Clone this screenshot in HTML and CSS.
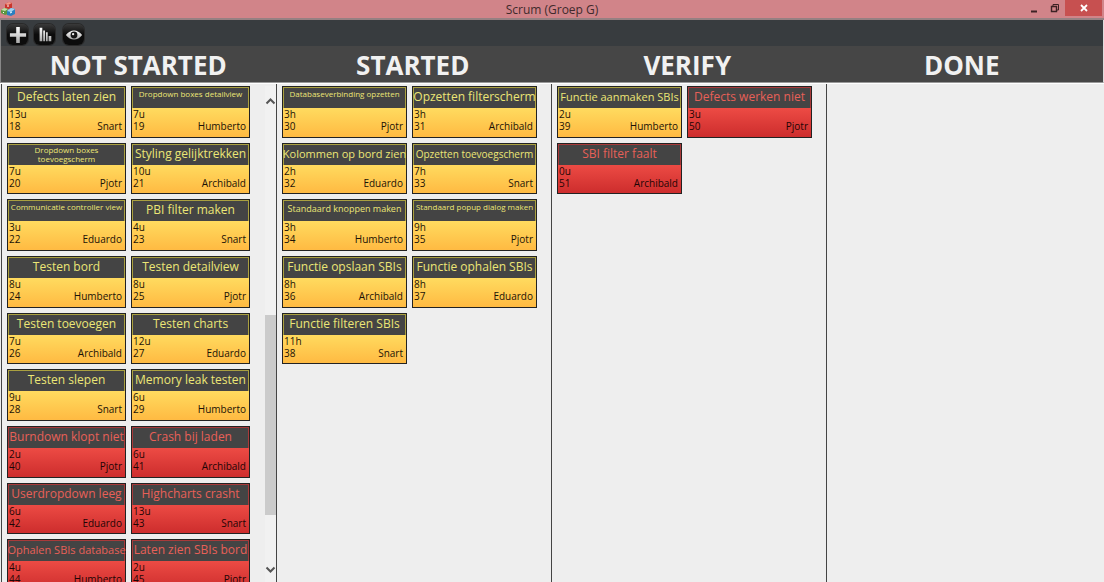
FILE: index.html
```html
<!DOCTYPE html>
<html lang="nl">
<head>
<meta charset="utf-8">
<title>Scrum (Groep G)</title>
<link rel="stylesheet" href="styles.css">
</head>
<body>
<div class="window">
<header class="titlebar">
<svg class="app-icon" viewBox="0 0 16 16" aria-hidden="true">
<path d="M5 3l4-2 3 1v5l-4 1-3-1z" fill="#c8352c"/><path d="M5 3l4-2 3 1-4 2z" fill="#f29a8c"/>
<path d="M1 9l3-2 4 1v5l-3 1-4-2z" fill="#5c9640"/><path d="M1 9l3-2 4 1-3 2z" fill="#c3dda4"/>
<path d="M7 10l4-3 4 1v5l-4 2-4-1z" fill="#2b7fc0"/><path d="M7 10l4-3 4 1-4 3z" fill="#a4d4f0"/>
<path d="M7 5l2 0M3 11l1 1M10 12l2-1" stroke="#fff" fill="none"/>
</svg>
<h1 class="window-title">Scrum (Groep G)</h1>
<div class="window-buttons">
<button class="win-btn" aria-label="Minimaliseren"><svg viewBox="0 0 10 10"><path d="M2 8.5h6" stroke="#3c2224" stroke-width="2"/></svg></button>
<button class="win-btn" aria-label="Herstellen"><svg viewBox="0 0 10 10" fill="none" stroke="#3c2224"><path d="M1.5 3.5h5v5h-5z" stroke-width="1.4"/><path d="M3 3V1.5h5.500v5.500H7"/></svg></button>
<button class="win-btn close" aria-label="Sluiten"><svg viewBox="0 0 10 10"><path d="M2 2l6 6M8 2l-6 6" stroke="#fff" stroke-width="1.8"/></svg></button>
</div>
</header>
<nav class="toolbar">
<button class="tool" aria-label="Toevoegen"><svg viewBox="0 0 20 20"><defs><linearGradient id="m" x2="0" y2="1"><stop stop-color="#fff"/><stop offset="1" stop-color="#a8a8a8"/></linearGradient></defs><path d="M8 1h4v7h7v4h-7v7H8v-7H1V8h7z" fill="url(#m)"/></svg></button>
<button class="tool" aria-label="Grafieken"><svg viewBox="0 0 20 20"><path d="M4 2h3v15H4zM8 5h2v12H8zM11 7h2v10h-2zM14 11h3v6h-3z" fill="url(#m)"/></svg></button>
<button class="tool gap" aria-label="Weergave"><svg viewBox="0 0 20 20"><path d="M1 10Q5 5 10 5t9 5Q15 15 10 15T1 10z" fill="url(#m)"/><circle cx="10" cy="10" r="3.8" fill="#151515"/><circle cx="9" cy="9" r="1.3" fill="#eee"/></svg></button>
</nav>
<div class="headings">
<h2>NOT STARTED</h2><h2>STARTED</h2><h2>VERIFY</h2><h2>DONE</h2>
</div>
<main class="board">
<section class="column scrolling" aria-label="Not started">
<div class="cards">
<article class="card"><h3>Defects laten zien</h3><p>13u</p><p class="row"><span>18</span><span>Snart</span></p></article>
<article class="card"><h3 class="small">Dropdown boxes detailview</h3><p>7u</p><p class="row"><span>19</span><span>Humberto</span></p></article>
<article class="card"><h3 class="small wrap">Dropdown boxes toevoegscherm</h3><p>7u</p><p class="row"><span>20</span><span>Pjotr</span></p></article>
<article class="card"><h3>Styling gelijktrekken</h3><p>10u</p><p class="row"><span>21</span><span>Archibald</span></p></article>
<article class="card"><h3 class="small">Communicatie controller view</h3><p>3u</p><p class="row"><span>22</span><span>Eduardo</span></p></article>
<article class="card"><h3>PBI filter maken</h3><p>4u</p><p class="row"><span>23</span><span>Snart</span></p></article>
<article class="card"><h3>Testen bord</h3><p>8u</p><p class="row"><span>24</span><span>Humberto</span></p></article>
<article class="card"><h3>Testen detailview</h3><p>8u</p><p class="row"><span>25</span><span>Pjotr</span></p></article>
<article class="card"><h3>Testen toevoegen</h3><p>7u</p><p class="row"><span>26</span><span>Archibald</span></p></article>
<article class="card"><h3>Testen charts</h3><p>12u</p><p class="row"><span>27</span><span>Eduardo</span></p></article>
<article class="card"><h3>Testen slepen</h3><p>9u</p><p class="row"><span>28</span><span>Snart</span></p></article>
<article class="card"><h3>Memory leak testen</h3><p>6u</p><p class="row"><span>29</span><span>Humberto</span></p></article>
<article class="card defect"><h3>Burndown klopt niet</h3><p>2u</p><p class="row"><span>40</span><span>Pjotr</span></p></article>
<article class="card defect"><h3>Crash bij laden</h3><p>6u</p><p class="row"><span>41</span><span>Archibald</span></p></article>
<article class="card defect"><h3>Userdropdown leeg</h3><p>6u</p><p class="row"><span>42</span><span>Eduardo</span></p></article>
<article class="card defect"><h3>Highcharts crasht</h3><p>13u</p><p class="row"><span>43</span><span>Snart</span></p></article>
<article class="card defect"><h3 class="medium">Ophalen SBIs database</h3><p>4u</p><p class="row"><span>44</span><span>Humberto</span></p></article>
<article class="card defect"><h3>Laten zien SBIs bord</h3><p>2u</p><p class="row"><span>45</span><span>Pjotr</span></p></article>
</div>
<div class="scrollbar">
<button aria-label="Omhoog"><svg viewBox="0 0 11 8"><path d="M1.5 6.5l4-4 4 4" fill="none" stroke="#555" stroke-width="2"/></svg></button>
<div class="track"><div class="thumb"></div></div>
<button aria-label="Omlaag"><svg viewBox="0 0 11 8"><path d="M1.5 1.5l4 4 4-4" fill="none" stroke="#555" stroke-width="2"/></svg></button>
</div>
</section>
<section class="column" aria-label="Started">
<div class="cards">
<article class="card"><h3 class="small">Databaseverbinding opzetten</h3><p>3h</p><p class="row"><span>30</span><span>Pjotr</span></p></article>
<article class="card"><h3>Opzetten filterscherm</h3><p>3h</p><p class="row"><span>31</span><span>Archibald</span></p></article>
<article class="card"><h3 class="medium">Kolommen op bord zien</h3><p>2h</p><p class="row"><span>32</span><span>Eduardo</span></p></article>
<article class="card"><h3 class="compact">Opzetten toevoegscherm</h3><p>7h</p><p class="row"><span>33</span><span>Snart</span></p></article>
<article class="card"><h3 class="tight">Standaard knoppen maken</h3><p>3h</p><p class="row"><span>34</span><span>Humberto</span></p></article>
<article class="card"><h3 class="small">Standaard popup dialog maken</h3><p>9h</p><p class="row"><span>35</span><span>Pjotr</span></p></article>
<article class="card"><h3>Functie opslaan SBIs</h3><p>8h</p><p class="row"><span>36</span><span>Archibald</span></p></article>
<article class="card"><h3>Functie ophalen SBIs</h3><p>8h</p><p class="row"><span>37</span><span>Eduardo</span></p></article>
<article class="card"><h3>Functie filteren SBIs</h3><p>11h</p><p class="row"><span>38</span><span>Snart</span></p></article>
</div>
</section>
<section class="column" aria-label="Verify">
<div class="cards">
<article class="card"><h3 class="medium">Functie aanmaken SBIs</h3><p>2u</p><p class="row"><span>39</span><span>Humberto</span></p></article>
<article class="card defect"><h3>Defects werken niet</h3><p>3u</p><p class="row"><span>50</span><span>Pjotr</span></p></article>
<article class="card defect"><h3>SBI filter faalt</h3><p>0u</p><p class="row"><span>51</span><span>Archibald</span></p></article>
</div>
</section>
<section class="column" aria-label="Done"></section>
</main>
</div>
</body>
</html>
```
FILE: styles.css
```css
* { box-sizing: border-box; }
body { margin: 0; font-family: "Open Sans", "Noto Sans", sans-serif; background: #eee; overflow: hidden; }
h1, h2, h3, p { margin: 0; font-weight: 400; }
button { border: 0; padding: 0; background: none; display: flex; align-items: center; justify-content: center; }
svg { display: block; }

.window { height: 100vh; display: flex; flex-direction: column; }

.titlebar { display: grid; grid-template-columns: 1fr auto 1fr; flex: none; height: 20px; background: #d18489; border-bottom: 2px solid #968082; }
.app-icon { width: 16px; height: 16px; margin-top: 1px; }
.window-title { font-size: 12px; line-height: 19px; color: #402a2c; }
.window-buttons { display: flex; justify-content: flex-end; padding-right: 2px; }
.win-btn { width: 21px; height: 16px; }
.win-btn svg { width: 10px; height: 10px; }
.win-btn.close { width: 37px; background: #c75050; }

.toolbar { display: flex; flex: none; gap: 6px; height: 26px; padding: 4px 6px; background: #383c3f; border-left: 1px solid #888; border-right: 1px solid #ddd; }
.tool { width: 21px; height: 21px; border-radius: 6px; background: linear-gradient(#3a3a3a, #0c0c0c 50%); box-shadow: 0 0 0 1px #2a2a2a; }
.tool svg { width: 18px; height: 18px; }
.tool.gap { margin-left: 2px; }

.headings { display: grid; grid-template-columns: repeat(4, 1fr); flex: none; height: 37px; padding-right: 4px; background: #464646; border-left: 1px solid #888; border-right: 1px solid #ddd; border-bottom: 1px solid #999; }
.headings h2 { text-align: center; font-size: 26px; font-weight: 700; line-height: 39px; color: #f1f1f1; }

.board { flex: 1; min-height: 0; display: grid; grid-template-columns: repeat(4, 1fr); grid-template-rows: 100%; padding: 0 3px 0 1px; border-top: 1px solid #fff; }
.column { display: flex; min-width: 0; border-left: 1px solid #444; padding: 2px 14px 0 5px; overflow: hidden; }
.column.scrolling { padding-right: 0; }
.cards { flex: 1; min-width: 0; display: grid; grid-template-columns: 1fr 1fr; grid-auto-rows: 52px 51px 52px; gap: 5px; align-content: start; }
.scrolling .cards { padding-right: 15px; }

.card { min-width: 0; border: 1px solid #222; padding: 0 1px; background: linear-gradient(#ffdc60 40%, #ffba42); font-size: 10px; line-height: 12px; color: #1c1206; }
.card h3 { display: flex; justify-content: center; height: 21px; margin: 0 -1px; border: 1px solid #aaa040; border-bottom: 0; background: #444; color: #ece676; font-size: 12px; line-height: 18px; text-align: center; white-space: nowrap; }
.card h3.medium { font-size: 11px; }
.card h3.compact { font-size: 10px; }
.card h3.tight { font-size: 9px; line-height: 15px; }
.card h3.small { font-size: 8px; line-height: 11px; }
.card h3.wrap { padding: 0 20px; line-height: 9px; white-space: normal; }
.card .row { display: flex; justify-content: space-between; padding-right: 2px; }
.card.defect { background: linear-gradient(#ee4c45 40%, #cd2d2d); color: #1e0505; }
.card.defect h3 { border-color: #a83a3a; color: #e86058; }

.scrollbar { width: 11px; display: flex; flex-direction: column; background: #f1f1f1; }
.scrollbar button { flex: none; width: 11px; height: 24px; margin-top: 3px; }
.scrollbar svg { width: 11px; height: 8px; }
.track { flex: 1; display: flex; flex-direction: column; justify-content: flex-end; padding-bottom: 40px; }
.thumb { height: 200px; background: #cbcbcb; }
```
